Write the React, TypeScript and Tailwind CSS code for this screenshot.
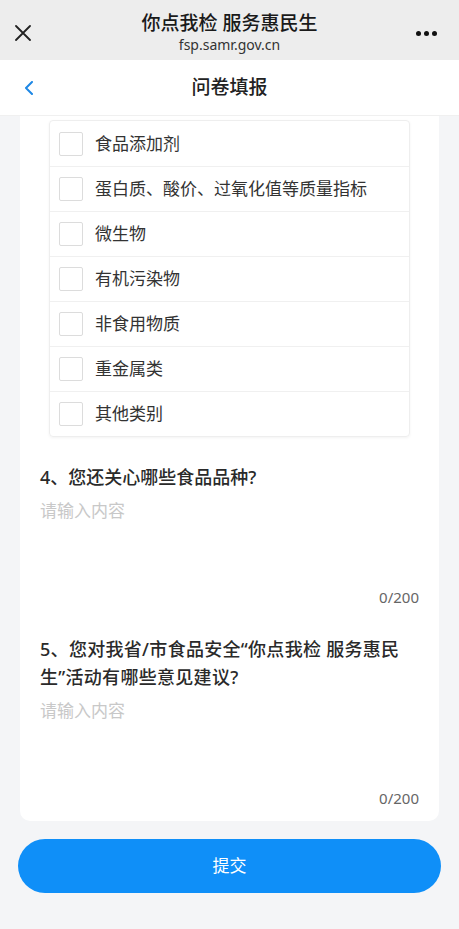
import React from "react";

const options = [
  "食品添加剂",
  "蛋白质、酸价、过氧化值等质量指标",
  "微生物",
  "有机污染物",
  "非食用物质",
  "重金属类",
  "其他类别",
];

const font = { fontFamily: "'Noto Sans', 'Noto Sans CJK SC', sans-serif" };

export default function App() {
  return (
    <div
      className="w-[459px] h-[929px] overflow-hidden bg-[#f4f5f7] flex flex-col"
      style={font}
    >
      {/* WeChat-style top bar */}
      <div className="h-[60px] bg-[#ededed] relative flex items-center justify-center shrink-0">
        <svg width="16" height="16" viewBox="0 0 16 16" className="absolute left-[15px] top-[25px]">
          <path d="M1 1 L15 15 M15 1 L1 15" stroke="#222" strokeWidth="1.8" strokeLinecap="round" />
        </svg>
        <div className="flex flex-col items-center mt-[4px]">
          <div className="text-[19px] leading-[24px] text-[#1a1a1a] font-medium">你点我检 服务惠民生</div>
          <div className="text-[14px] leading-[18px] text-[#333] mt-[1px]">fsp.samr.gov.cn</div>
        </div>
        <div className="absolute right-[22px] top-[31px] flex gap-[3px] items-center">
          <span className="w-[5px] h-[5px] rounded-full bg-[#111]" />
          <span className="w-[5px] h-[5px] rounded-full bg-[#111]" />
          <span className="w-[5px] h-[5px] rounded-full bg-[#111]" />
        </div>
      </div>

      {/* Nav bar */}
      <div className="h-[56px] bg-white relative flex items-center justify-center shrink-0 border-b border-[#f0f0f0]">
        <svg
          width="10"
          height="14"
          viewBox="0 0 10 14"
          className="absolute left-[24px] top-[21px]"
        >
          <path d="M8 1 L2 7 L8 13" stroke="#1e88e5" strokeWidth="2" fill="none" strokeLinecap="round" strokeLinejoin="round" />
        </svg>
        <div className="text-[19px] text-[#222] font-medium">问卷填报</div>
      </div>

      {/* Body */}
      <div className="flex-1 flex flex-col px-[20px]">
        <div className="bg-white rounded-b-[10px] px-[20px] pt-[4px] pb-[13px]">
          <div className="mx-[9px] border border-[#eeeeee] rounded-[4px] shadow-[0_1px_3px_rgba(0,0,0,0.05)]">
            {options.map((o, i) => (
              <div
                key={o}
                className={
                  "h-[45px] flex items-center pl-[9px] gap-[12px] " +
                  (i > 0 ? "border-t border-[#f0f0f0]" : "")
                }
              >
                <span className="w-[24px] h-[24px] border-[1.5px] border-[#dcdcdc] rounded-[2px] bg-white shrink-0" />
                <span className="text-[17px] text-[#333]">{o}</span>
              </div>
            ))}
          </div>

          <div className="mt-[26px] text-[18px] leading-[28px] text-[#2a2a2a] font-medium">
            4、您还关心哪些食品品种?
          </div>
          <div className="mt-[8px] h-[88px] text-[17px] leading-[24px] text-[#c8c8c8]">请输入内容</div>
          <div className="text-right text-[15px] leading-[20px] text-[#666]">0/200</div>

          <div className="mt-[28px] text-[18px] leading-[28px] text-[#2a2a2a] font-medium tracking-[0.3px]">
            5、您对我省/市食品安全“你点我检 服务惠民
            <br />
            生”活动有哪些意见建议?
          </div>
          <div className="mt-[8px] h-[89px] text-[17px] leading-[24px] text-[#c8c8c8]">请输入内容</div>
          <div className="text-right text-[15px] leading-[20px] text-[#666]">0/200</div>
        </div>

        <button className="mt-[18px] -mx-[2px] h-[54px] rounded-full bg-[#0f8ff8] text-white text-[17px] flex items-center justify-center">
          提交
        </button>
      </div>
    </div>
  );
}
